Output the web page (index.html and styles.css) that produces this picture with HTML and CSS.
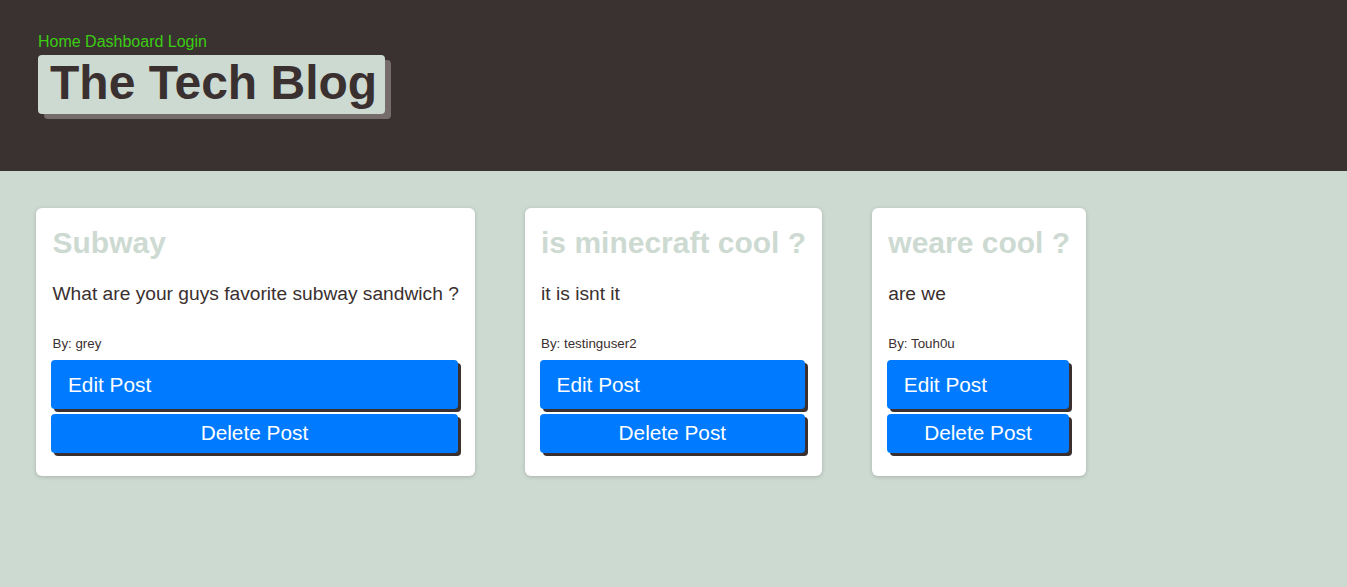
FILE: index.html
```html
<!DOCTYPE html>
<html lang="en">
<head>
<meta charset="utf-8">
<title>The Tech Blog</title>
<link rel="stylesheet" href="styles.css">
</head>
<body>
<header class="site-header">
  <nav class="nav">
    <a href="#">Home</a>
    <a href="#">Dashboard</a>
    <a href="#">Login</a>
  </nav>
  <h1 class="brand">The Tech Blog</h1>
</header>
<main class="posts">
  <article class="card">
    <h2 class="card-title">Subway</h2>
    <p class="card-body">What are your guys favorite subway sandwich ?</p>
    <small class="card-author">By: grey</small>
    <a class="btn btn-edit" href="#">Edit Post</a>
    <button class="btn btn-delete" type="button">Delete Post</button>
  </article>
  <article class="card">
    <h2 class="card-title">is minecraft cool ?</h2>
    <p class="card-body">it is isnt it</p>
    <small class="card-author">By: testinguser2</small>
    <a class="btn btn-edit" href="#">Edit Post</a>
    <button class="btn btn-delete" type="button">Delete Post</button>
  </article>
  <article class="card">
    <h2 class="card-title">weare cool ?</h2>
    <p class="card-body">are we</p>
    <small class="card-author">By: Touh0u</small>
    <a class="btn btn-edit" href="#">Edit Post</a>
    <button class="btn btn-delete" type="button">Delete Post</button>
  </article>
</main>
</body>
</html>
```

FILE: styles.css
```css
* { box-sizing: border-box; }

html, body {
  margin: 0;
  padding: 0;
}

body {
  background: #cddad2;
  font-family: "Liberation Sans", Arial, sans-serif;
  color: #3a3030;
  min-height: 587px;
}

.site-header {
  background: #3a3131;
  padding: 32.5px 38px 57px;
}

.nav {
  display: flex;
  gap: 4.4px;
  font-size: 16px;
  line-height: 18.4px;
  margin-bottom: 4px;
}

.nav a {
  color: #3acd12;
  text-decoration: none;
}

.brand {
  display: inline-block;
  margin: 0;
  background: #cddad2;
  color: #3a3030;
  font-size: 48px;
  font-weight: bold;
  line-height: 53.6px;
  padding: 1.5px 8px 3.9px 12px;
  border-radius: 4px;
  box-shadow: 6px 5px 0 #756c6b;
}

.posts {
  display: flex;
  align-items: flex-start;
  gap: 50px;
  padding: 37px 36px;
}

.card {
  display: flex;
  flex-direction: column;
  background: #ffffff;
  border-radius: 6px;
  padding: 18px 15.7px 23px 15px;
  box-shadow: 0 1px 4px rgba(0, 0, 0, 0.18);
}

.card-title {
  margin: 0 0 23.5px;
  padding-left: 1.5px;
  font-size: 30px;
  line-height: 33.5px;
  font-weight: bold;
  color: #cddad2;
  white-space: nowrap;
}

.card-body {
  margin: 0 0 31.6px;
  padding-left: 1.5px;
  font-size: 19.2px;
  line-height: 21.4px;
  white-space: nowrap;
}

.card-author {
  display: block;
  padding-left: 1.5px;
  font-size: 13.33px;
  line-height: 15px;
  margin-bottom: 9px;
}

.btn {
  display: block;
  margin-right: 1px;
  background: #007bff;
  color: #ffffff;
  font-family: "Liberation Sans", Arial, sans-serif;
  font-size: 20.8px;
  line-height: 23.2px;
  border: none;
  border-radius: 4px;
  box-shadow: 3px 3px 0 #3a3030;
  text-decoration: none;
  cursor: pointer;
}

.btn-edit {
  padding: 13px 17px 12.8px;
  text-align: left;
}

.btn-delete {
  margin-top: 5px;
  padding: 7px 0 8.8px;
  text-align: center;
}
```
